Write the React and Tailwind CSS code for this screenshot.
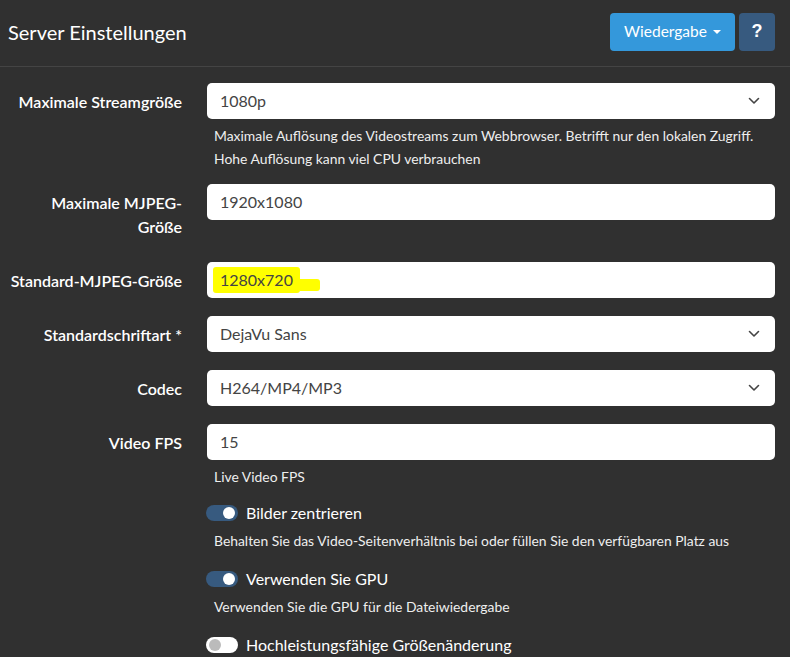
import React, { useState } from 'react';

const ChevronDown = () => (
  <svg width="12" height="8" viewBox="0 0 12 8" fill="none" className="shrink-0">
    <path d="M1.5 1.5 6 6l4.5-4.5" stroke="#444" strokeWidth="1.6" strokeLinecap="round" strokeLinejoin="round" />
  </svg>
);

const Field = ({ value, select, highlight }) => (
  <div className="flex h-[36px] items-center justify-between rounded-[5px] bg-white pl-[13px] pr-[15px] text-[16px] text-[#444]">
    {highlight ? (
      <span className="-ml-[7px] flex items-end">
        <span className="rounded-[3px] bg-[#ffff00] px-[7px] py-[1px]">{value}</span>
        <span className="mb-[2px] h-[12px] w-[20px] rounded-r-[3px] bg-[#ffff00]" />
      </span>
    ) : (
      <span>{value}</span>
    )}
    {select && <ChevronDown />}
  </div>
);

const Row = ({ label, children, help, className = '' }) => (
  <div className={`flex ${className}`}>
    <label className="w-[182px] shrink-0 py-[7px] text-right text-[16px] font-semibold leading-[24px] text-white">
      {label}
    </label>
    <div className="ml-[25px] flex-1">
      {children}
      {help && <div className="ml-[7px] mt-[5px] text-[13.9px] leading-[23px] text-[#eee]">{help}</div>}
    </div>
  </div>
);

const Toggle = ({ on, label, help, className = '' }) => {
  const [checked, setChecked] = useState(on);
  return (
    <div className={className}>
      <button onClick={() => setChecked(!checked)} className="flex items-center gap-[8px]">
        <span
          className={`flex h-[16px] w-[32px] items-center rounded-full px-[3px] ${
            checked ? 'justify-end bg-[#375a7f]' : 'justify-start bg-white'
          }`}
        >
          <span className={`h-[12px] w-[12px] rounded-full ${checked ? 'bg-white' : 'bg-[#bbb]'}`} />
        </span>
        <span className="text-[16px] leading-[22px] text-white">{label}</span>
      </button>
      {help && <div className="ml-[8px] mt-[5px] text-[13.9px] leading-[23px] text-[#eee]">{help}</div>}
    </div>
  );
};

export default function App() {
  return (
    <div className="h-[657px] overflow-hidden bg-[#303030] font-['Lato',sans-serif]">
      {/* Header */}
      <div className="flex h-[67px] items-center justify-between border-b border-[#444] pl-[8px] pr-[15px]">
        <h1 className="pb-[2px] text-[20px] text-white">Server Einstellungen</h1>
        <div className="flex gap-[4px] pb-[3px]">
          <button className="flex h-[38px] w-[125px] items-center justify-center gap-[6px] rounded-[4px] bg-[#3498db] text-[15.5px] text-white">
            Wiedergabe
            <span className="mt-[1px] border-x-[4px] border-t-[4px] border-x-transparent border-t-white" />
          </button>
          <button className="flex h-[38px] w-[36px] items-center justify-center rounded-[4px] bg-[#375a7f] font-['Liberation_Sans',sans-serif] text-[18px] font-bold text-white">
            ?
          </button>
        </div>
      </div>

      {/* Form */}
      <div className="pr-[15px] pt-[16px]">
        <Row
          label="Maximale Streamgröße"
          help={
            <>
              Maximale Auflösung des Videostreams zum Webbrowser. Betrifft nur den lokalen Zugriff.
              <br />
              Hohe Auflösung kann viel CPU verbrauchen
            </>
          }
        >
          <Field value="1080p" select />
        </Row>

        <Row label={<>Maximale MJPEG-<br />Größe</>} className="mt-[14px]">
          <Field value="1920x1080" />
        </Row>

        <Row label="Standard-MJPEG-Größe" className="mt-[16px]">
          <Field value="1280x720" highlight />
        </Row>

        <Row label="Standardschriftart *" className="mt-[16px]">
          <Field value="DejaVu Sans" select />
        </Row>

        <Row label="Codec" className="mt-[16px]">
          <Field value="H264/MP4/MP3" select />
        </Row>

        <Row label="Video FPS" help="Live Video FPS" className="mt-[16px]">
          <Field value="15" />
        </Row>

        <div className="ml-[206px]">
          <Toggle
            on
            label="Bilder zentrieren"
            help="Behalten Sie das Video-Seitenverhältnis bei oder füllen Sie den verfügbaren Platz aus"
            className="mt-[14px]"
          />
          <Toggle
            on
            label="Verwenden Sie GPU"
            help="Verwenden Sie die GPU für die Dateiwiedergabe"
            className="mt-[16px]"
          />
          <Toggle on={false} label="Hochleistungsfähige Größenänderung" className="mt-[16px]" />
        </div>
      </div>
    </div>
  );
}
